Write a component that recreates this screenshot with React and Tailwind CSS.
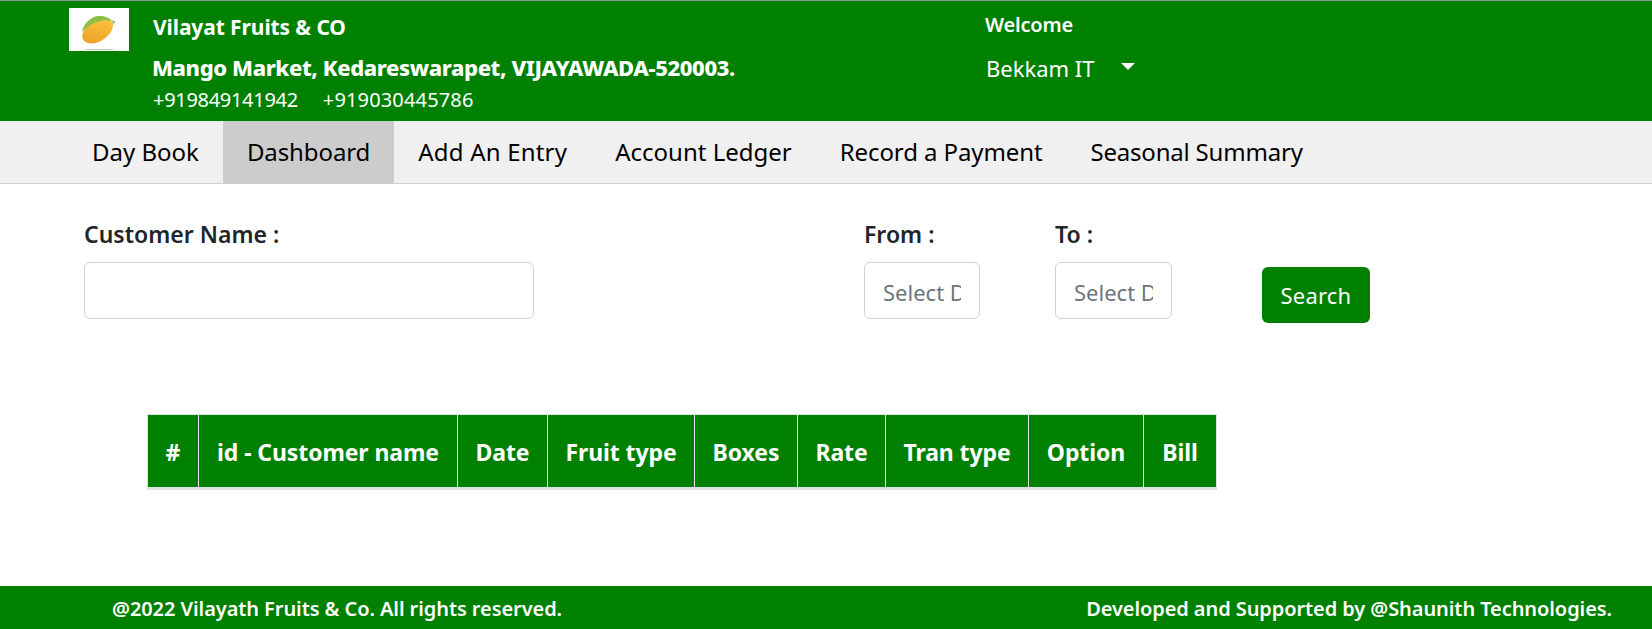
import React from "react";

const navItems = [
    { label: "Day Book", tracking: "tracking-[0px]" },
    { label: "Dashboard", tracking: "tracking-[-0.1px]" },
    { label: "Add An Entry", tracking: "tracking-[0.2px]" },
    { label: "Account Ledger", tracking: "tracking-[0px]" },
    { label: "Record a Payment", tracking: "tracking-[-0.1px]" },
    { label: "Seasonal Summary", tracking: "tracking-[-0.2px]" },
];

const columns = [
    { label: "#", width: "w-[51px]" },
    { label: "id - Customer name", width: "w-[259px]" },
    { label: "Date", width: "w-[90px]" },
    { label: "Fruit type", width: "w-[147px]" },
    { label: "Boxes", width: "w-[103px]" },
    { label: "Rate", width: "w-[88px]" },
    { label: "Tran type", width: "w-[143px]" },
    { label: "Option", width: "w-[115px]" },
    { label: "Bill", width: "w-[73px]" },
];

const MangoLogo = () => (
    <div className="w-[60px] h-[43px] bg-white shrink-0 flex items-center justify-center">
        <svg width="60" height="43" viewBox="0 0 60 43">
            <defs>
                <linearGradient id="mangoBody" x1="0.7" y1="0" x2="0.3" y2="1">
                    <stop offset="0" stopColor="#fbc13e" />
                    <stop offset="1" stopColor="#eda226" />
                </linearGradient>
            </defs>
            <path d="M13 24 C14 16 22 8 30 8 C36 8 41 10 43 13 L32 17 C24 18 17 20 13 24 Z" fill="#8fbe45" />
            <path d="M14 31 C11 24 20 16 30 13.5 C36 12 42 11.5 44 15 C45 22 39 29 32 33 C25 37 16 36 14 31 Z" fill="url(#mangoBody)" />
            <path d="M43 12 L47 14 L44 16 Z" fill="#a8a89a" />
            <rect x="17" y="41" width="27" height="1" fill="#c9c9c9" />
        </svg>
    </div>
);

const DateField = ({ label, className }) => (
    <div className={className}>
        <label className="block text-[23px] leading-[28px] font-semibold text-[#212529] mb-[14px] whitespace-nowrap">{label}</label>
        <input
            type="text"
            placeholder="Select Date"
            className="block w-full h-[57px] px-[18px] pt-[2px] text-[22px] bg-white border border-[#ced4da] rounded-[6px] placeholder:text-[#6c757d] outline-none"
        />
    </div>
);

const App = () => {
    return (
        <div className="min-h-[629px] flex flex-col bg-white font-['Noto_Sans',sans-serif] overflow-hidden">
            <header className="h-[121px] bg-[#008000] border-t border-[#7f9f8f] flex text-white shrink-0">
                <div className="w-[985px] pl-[69px] pt-[7px] flex gap-[24px] shrink-0">
                    <MangoLogo />
                    <div>
                        <p className="text-[21px] leading-[24px] font-bold mt-[7px] tracking-[-0.1px]">Vilayat Fruits &amp; CO</p>
                        <p className="text-[22px] leading-[28px] font-extrabold mt-[14px] -ml-px tracking-[-0.4px]">Mango Market, Kedareswarapet, VIJAYAWADA-520003.</p>
                        <p className="text-[20px] leading-[28px] mt-[5px] tracking-[-0.3px]">
                            <span>+919849141942</span>
                            <span className="ml-[25px] tracking-[0.15px]">+919030445786</span>
                        </p>
                    </div>
                </div>
                <div className="pt-[11px]">
                    <p className="text-[20px] leading-[26px] font-semibold tracking-[-0.2px]">Welcome</p>
                    <div className="flex items-center mt-[15px] pl-[1px]">
                        <span className="text-[22px] leading-[30px] tracking-[0px]">Bekkam IT</span>
                        <span className="ml-[26px] mb-[3px] w-0 h-0 border-x-[7px] border-x-transparent border-t-[7px] border-t-white" />
                    </div>
                </div>
            </header>

            <nav className="h-[63px] bg-[#f0f0f0] border-b border-[#cfcfcf] flex pl-[68px] shrink-0">
                {navItems.map((item) => (
                    <a
                        key={item.label}
                        href="#"
                        className={`px-[24px] flex items-center text-[24px] text-black ${item.tracking} ${item.label === "Dashboard" ? "bg-[#cccccc]" : ""}`}
                    >
                        {item.label}
                    </a>
                ))}
            </nav>

            <main className="flex-1">
                <div className="flex pl-[84px] pt-[36px]">
                    <div className="w-[450px]">
                        <label className="block text-[23px] leading-[28px] font-semibold text-[#212529] mb-[14px]">Customer Name :</label>
                        <input type="text" className="block w-full h-[57px] bg-white border border-[#ced4da] rounded-[6px] outline-none" />
                    </div>
                    <DateField label="From :" className="w-[116px] ml-[330px]" />
                    <DateField label="To :" className="w-[117px] ml-[75px]" />
                    <button className="self-end w-[108px] h-[56px] ml-[90px] mb-[-4px] bg-[#008000] text-white text-[22px] tracking-[0.2px] rounded-[6px]">Search</button>
                </div>

                <table className="ml-[147px] mt-[95px] border-collapse table-fixed w-[1069px]">
                    <thead>
                        <tr className="h-[74px] bg-[#008000] text-white">
                            {columns.map((col) => (
                                <th
                                    key={col.label}
                                    className={`${col.width} pt-[3px] text-[23px] font-bold tracking-[-0.1px] text-center border border-b-[3px] border-[#dee2e6] whitespace-nowrap`}
                                >
                                    {col.label}
                                </th>
                            ))}
                        </tr>
                    </thead>
                </table>
            </main>

            <footer className="h-[43px] bg-[#008000] text-white flex items-center justify-between pl-[112px] pr-[40px] pt-[3px] text-[20px] font-semibold tracking-[-0.08px] shrink-0">
                <span>@2022 Vilayath Fruits &amp; Co. All rights reserved.</span>
                <span>Developed and Supported by @Shaunith Technologies.</span>
            </footer>
        </div>
    );
};

export default App;
